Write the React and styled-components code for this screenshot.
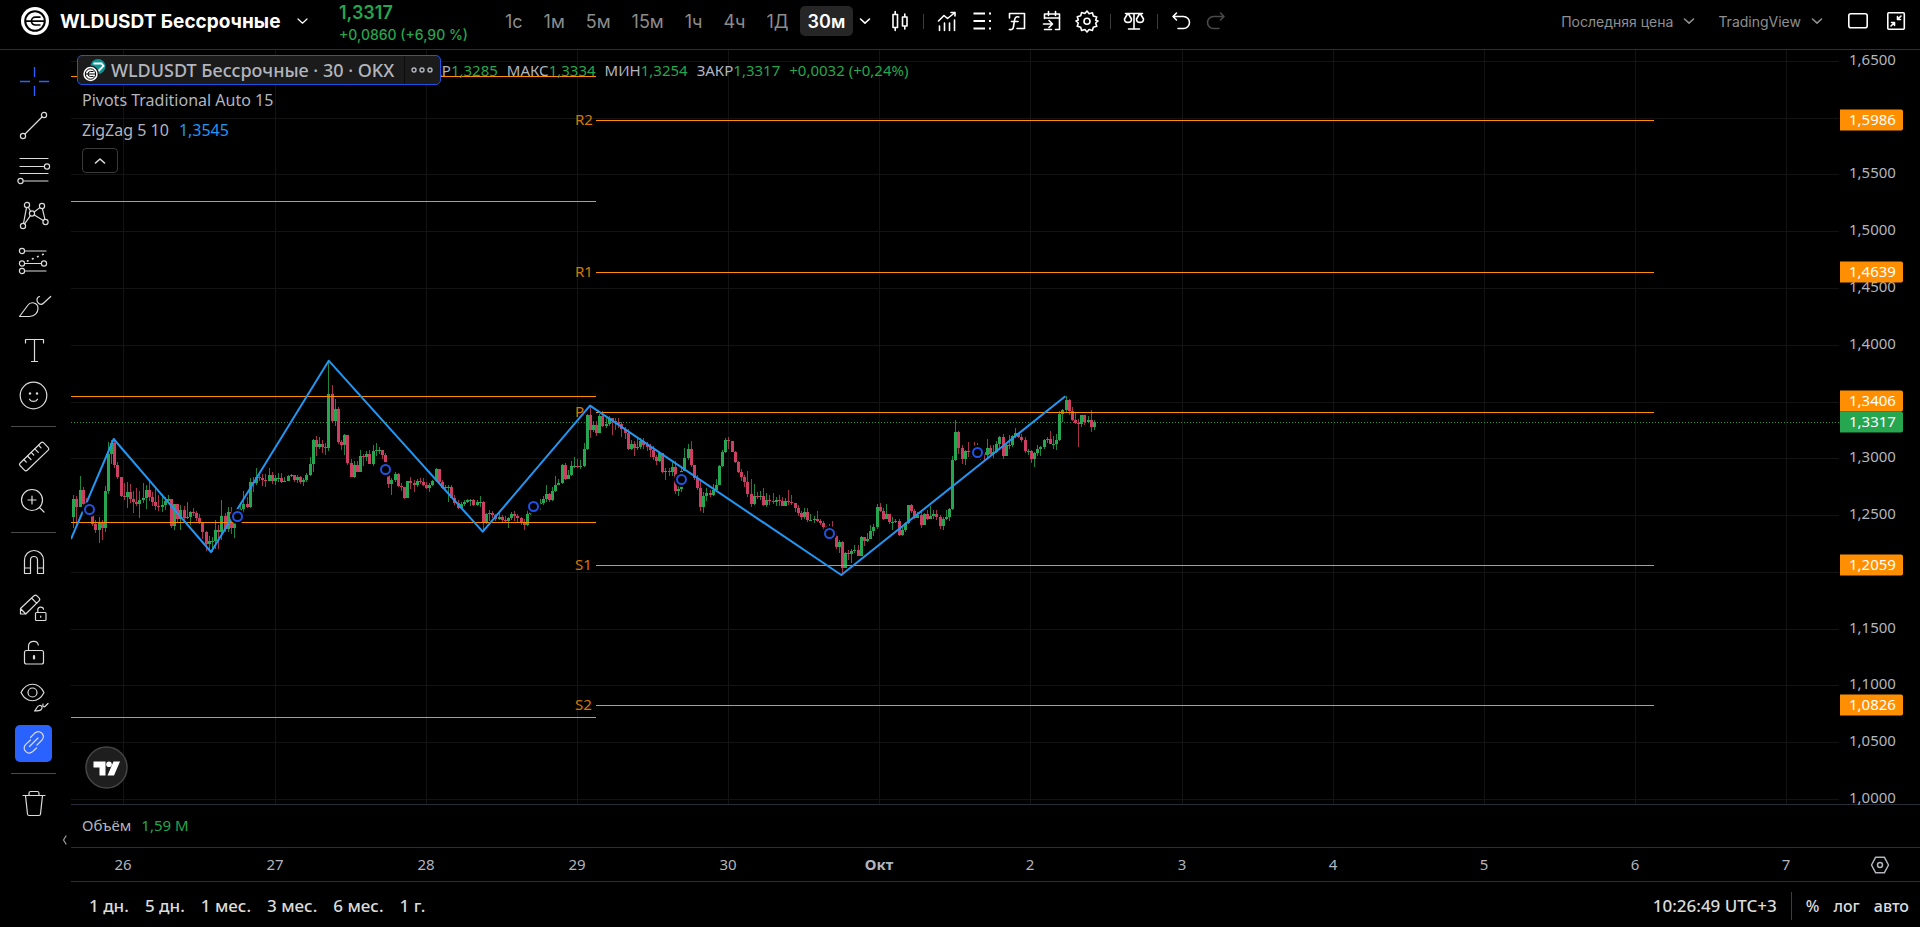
import React from "react";
import styled, { createGlobalStyle, css } from "styled-components";

const GlobalStyle = createGlobalStyle`
  *, *::before, *::after { box-sizing: border-box; }
  html, body, #root { height: 100%; }
  body { margin: 0; background: #000; color: #fff; font-family: "Noto Sans", "Open Sans", sans-serif; }
  button, select { font: inherit; color: inherit; background: none; border: 0; padding: 0; margin: 0; cursor: pointer; }
  svg { display: block; flex: none; }
`;

const UI_FONT = '"Inter", "Roboto", sans-serif';
const GREEN = "#26a64f";
const RED = "#cc3f63";
const ORANGE = "#ff8f00";
const LINE = "#2f2f2f";
const MUTED = "#b2b5be";

/* ---------- shell ---------- */

const Page = styled.div`
  display: flex;
  flex-direction: column;
  min-height: 100vh;
`;

const Header = styled.header`
  display: flex;
  align-items: center;
  height: 50px;
  padding: 0 12px 7px 21px;
  border-bottom: 1px solid ${LINE};
  font-family: ${UI_FONT};
  white-space: nowrap;
`;

const Body = styled.div`
  flex: 1;
  display: flex;
  min-height: 0;
`;

const Main = styled.main`
  flex: 1;
  min-width: 0;
  display: flex;
  flex-direction: column;
`;

/* ---------- header ---------- */

const SymbolButton = styled.button`
  display: flex;
  align-items: center;
  gap: 11px;
  width: 318px;
  font-size: 19px;
  font-weight: 700;
  svg:last-child { margin-left: 4px; }
`;

const Quote = styled.div`
  display: flex;
  flex-direction: column;
  width: 156px;
  padding-top: 6px;
  color: ${GREEN};
  font-weight: 600;
`;

const QuotePrice = styled.span`
  font-size: 18px;
  line-height: 22px;
`;

const QuoteChange = styled.span`
  font-size: 14px;
  line-height: 22px;
  font-weight: 500;
`;

const Intervals = styled.nav`
  display: flex;
  gap: 1px;
`;

const Interval = styled.button`
  height: 30px;
  padding: 0 10px;
  border-radius: 5px;
  font-size: 18px;
  color: #8c8c8c;
  ${(p) =>
    p.$active &&
    css`
      padding: 0 8px;
      background: #262626;
      color: #fff;
      font-weight: 600;
    `}
`;

const HeaderTools = styled.div`
  display: flex;
  align-items: center;
  gap: 11px;
`;

const IconButton = styled.button`
  display: flex;
  align-items: center;
  justify-content: center;
  width: 24px;
  height: 24px;
  color: ${(p) => (p.$dim ? "#4a4a4a" : "#fff")};
`;

const Divider = styled.span`
  width: 1px;
  height: ${(p) => p.$h}px;
  background: #3d3d3d;
`;

const HeaderRight = styled.div`
  display: flex;
  align-items: center;
  gap: 14px;
  margin-left: auto;
`;

const SelectWrap = styled.label`
  display: flex;
  align-items: center;
  gap: 10px;
  margin-right: 9px;
  color: #8f8f8f;
  font-size: 14px;
`;

const Select = styled.select`
  appearance: none;
  outline: none;
  field-sizing: content;
`;

/* ---------- drawing toolbar ---------- */

const Toolbar = styled.aside`
  position: relative;
  display: flex;
  flex-direction: column;
  align-items: center;
  width: 71px;
  padding: 9px 4px 0 0;
`;

const ToolButton = styled.button`
  width: 37px;
  height: 37px;
  margin: 4px 0;
  border-radius: 5px;
  color: ${(p) => (p.$accent ? "#2962ff" : "#dbdbdb")};
  background: ${(p) => (p.$on ? "#2962ff" : "transparent")};
`;

const ToolRule = styled.hr`
  width: 45px;
  height: 1px;
  margin: 7px 0 8px;
  border: 0;
  background: #4a4a4a;
`;

const Collapse = styled.button`
  position: absolute;
  right: 4px;
  bottom: 82px;
  color: #9a9a9a;
`;

/* ---------- chart ---------- */

const PaneRow = styled.section`
  flex: 1;
  display: flex;
  border-bottom: 1px solid #2a2e39;
`;

const Pane = styled.div`
  position: relative;
  flex: 1;
  min-width: 0;
`;

const Plot = styled.svg`
  position: absolute;
  inset: 0;
  width: 100%;
  height: 100%;
`;

const PivotLabel = styled.span`
  position: absolute;
  transform: translateY(-50%);
  color: #d67800;
  font-size: 15px;
  line-height: 20px;
`;

const Handle = styled.span`
  position: absolute;
  width: 11px;
  height: 11px;
  margin: -5px 0 0 -5px;
  border: 2px solid #1e53e5;
  border-radius: 50%;
  background: #000;
  box-shadow: 0 0 0 2px #000;
`;

const PriceAxis = styled.div`
  position: relative;
  width: 81px;
  font-size: 15px;
  color: ${MUTED};
`;

const PriceTick = styled.span`
  position: absolute;
  left: 10px;
  line-height: 20px;
  transform: translateY(-50%);
`;

const PriceTag = styled.span`
  position: absolute;
  left: 1px;
  width: 63px;
  height: 21px;
  padding-left: 9px;
  border-radius: 0 2px 2px 0;
  line-height: 19px;
  color: #fff;
  background: ${(p) => (p.$live ? GREEN : ORANGE)};
  transform: translateY(-50%);
`;

const Legend = styled.div`
  position: relative;
  display: flex;
  flex-direction: column;
  align-items: flex-start;
  padding: 5px 6px;
  font-size: 16px;
  color: ${MUTED};
  white-space: nowrap;
`;

const LegendHead = styled.div`
  display: flex;
  align-items: center;
`;

const LegendTitle = styled.div`
  position: relative;
  z-index: 1;
  display: flex;
  align-items: center;
  width: 364px;
  height: 30px;
  border: 1px solid #1e53e5;
  border-radius: 5px;
  background: #1b1b1b;
  font-size: 18px;
  font-weight: 500;
`;

const LegendName = styled.button`
  display: flex;
  align-items: center;
  gap: 5px;
  width: 327px;
  height: 28px;
  padding-left: 5px;
  border-right: 1px solid #0c0c0c;
`;

const LegendMore = styled.button`
  padding-left: 6px;
`;

const Ohlc = styled.div`
  display: flex;
  gap: 9px;
  margin-left: -28px;
  font-size: 15px;
`;

const Up = styled.span`
  color: ${GREEN};
`;

const LegendRow = styled.div`
  display: flex;
  gap: 10px;
  height: 30px;
  padding-left: 5px;
  line-height: 30px;
`;

const Study = styled.span`
  color: #2196f3;
`;

const LegendToggle = styled.button`
  display: flex;
  align-items: center;
  justify-content: center;
  width: 36px;
  height: 25px;
  margin: 3px 5px;
  border: 1px solid #3a3a3a;
  border-radius: 4px;
  color: #dbdbdb;
`;

const Brand = styled.a`
  position: absolute;
  left: 14px;
  bottom: 15px;
`;

const VolumePane = styled.section`
  display: flex;
  gap: 10px;
  height: 43px;
  padding-left: 11px;
  border-bottom: 1px solid #2a2e39;
  color: ${MUTED};
  font-size: 15px;
  line-height: 40px;
`;

const TimeAxis = styled.div`
  display: flex;
  height: 34px;
  border-bottom: 1px solid ${LINE};
  color: ${MUTED};
  font-size: 15px;
`;

const TimeScale = styled.div`
  position: relative;
  flex: 1;
`;

const TimeTick = styled.span`
  position: absolute;
  line-height: 33px;
  transform: translateX(-50%);
  font-weight: ${(p) => (p.$major ? 700 : 400)};
`;

const AxisSettings = styled.button`
  display: flex;
  align-items: center;
  justify-content: center;
  width: 81px;
  color: ${MUTED};
`;

const Footer = styled.footer`
  display: flex;
  align-items: center;
  height: 45px;
  padding: 2px 11px 0 18px;
  color: #dbdbdb;
  font-size: 17px;
  font-weight: 500;
  white-space: nowrap;
`;

const Ranges = styled.nav`
  display: flex;
  gap: 16px;
`;

const FooterRight = styled.div`
  display: flex;
  align-items: center;
  gap: 14px;
  margin-left: auto;
`;

const ScaleMode = styled.button`
  font-size: 16px;
`;

/* ---------- data ---------- */

const VIEW = { x: 71, y: 50, w: 1768, h: 754 };
const left = (x) => `${((x - VIEW.x) / VIEW.w) * 100}%`;
const top = (y) => `${((y - VIEW.y) / VIEW.h) * 100}%`;

const priceTicks = [
  ["1,6500", 61], ["1,6000", 118], ["1,5500", 174], ["1,5000", 231], ["1,4500", 288], ["1,4000", 345], ["1,3500", 402],
  ["1,3000", 458], ["1,2500", 515], ["1,2000", 572], ["1,1500", 629], ["1,1000", 685], ["1,0500", 742], ["1,0000", 799],
];

const timeTicks = [
  ["26", 123], ["27", 275], ["28", 426], ["29", 577], ["30", 728], ["Окт", 879],
  ["2", 1030], ["3", 1182], ["4", 1333], ["5", 1484], ["6", 1635], ["7", 1786],
];

const priceTags = [
  { text: "1,5986", y: 120 },
  { text: "1,4639", y: 272 },
  { text: "1,3406", y: 401 },
  { text: "1,3317", y: 422, live: true },
  { text: "1,2059", y: 565 },
  { text: "1,0826", y: 705 },
];

const oldPivots = [76, 201, 396, 522, 717];
const pivots = [["R2", 120], ["R1", 272], ["P", 412], ["S1", 565], ["S2", 705]];

const zigzag = "71,539 113.7,439 211,552 328.7,360.7 482.7,531.7 590,405.7 841.3,575 1065.3,396.3";
const handles = [[89, 509], [237, 516], [385, 469], [533, 506], [681, 479], [829, 533], [977, 452]];

/* close, high, low of each 30-minute bar */
const bars = `499 495 528,507 496 526,490 476 507,504 487 507,505 498 515,507 503 512,524 514 526,530 520 533,522 517 543,528 520 540,
491 486 532,454 442 494,443 440 464,465 439 468,477 462 479,496 477 497,497 483 500,492 482 508,499 484 503,502 491 513,
504 488 506,500 491 518,498 483 503,490 485 509,497 481 501,502 492 506,506 489 510,507 495 511,505 494 512,501 497 510,
499 495 504,526 500 528,504 504 530,519 504 522,510 505 530,518 506 520,517 502 519,512 511 525,513 508 516,518 511 521,
523 514 524,532 522 539,544 531 551,541 536 551,541 537 552,530 520 549,532 525 549,516 500 540,529 513 532,512 507 532,
528 507 534,520 512 538,514 508 523,509 504 520,504 491 514,507 497 508,482 478 508,483 477 492,477 468 485,478 472 481,
480 474 486,481 474 487,475 468 481,481 472 484,478 475 485,478 473 482,482 473 483,481 477 482,476 475 481,475 474 477,
480 475 482,477 475 483,482 476 484,480 478 486,475 473 482,464 457 476,440 439 472,447 436 456,444 437 449,447 440 453,
448 443 455,394 361 451,421 385 423,409 399 426,442 407 444,445 440 450,435 434 455,463 435 465,477 459 477,465 461 478,
472 461 472,456 450 472,457 454 466,454 451 461,464 450 464,451 445 466,450 443 456,450 447 454,455 450 459,465 453 466,
484 468 488,480 478 495,474 472 482,486 473 487,487 483 491,498 487 499,481 481 498,483 477 489,485 480 492,481 479 487,
482 478 484,485 478 486,488 482 489,485 483 492,481 480 486,469 468 482,482 469 483,488 480 489,487 485 490,487 485 502,
498 485 498,503 495 505,508 500 509,504 502 509,502 500 506,500 499 503,500 499 506,505 499 506,502 500 506,502 496 507,
523 501 531,514 513 524,513 510 521,515 511 518,519 514 521,517 512 520,520 515 523,521 516 523,518 517 528,514 512 520,
516 511 521,518 514 523,522 517 525,525 519 530,514 510 526,512 508 515,507 503 510,504 500 508,503 499 510,499 496 505,
494 485 502,500 493 502,491 487 501,485 476 492,483 479 485,465 464 484,479 463 480,475 470 479,466 461 476,466 457 468,
467 459 468,466 460 469,449 443 467,415 414 450,430 407 438,425 421 432,433 421 436,416 414 433,426 411 427,424 418 428,
418 416 426,421 418 435,422 418 430,424 418 428,429 422 437,433 427 439,449 429 450,444 440 450,448 441 456,447 437 450,
441 438 449,445 438 449,447 442 451,450 444 457,457 446 460,461 455 465,453 452 462,472 453 473,471 468 480,472 468 476,
467 462 476,491 461 494,489 483 496,471 468 492,458 448 471,449 444 460,465 441 467,478 465 480,488 475 490,507 480 511,
496 492 513,493 488 501,495 490 497,490 484 496,485 479 490,466 465 485,452 450 467,440 438 453,441 437 449,452 441 452,
462 451 463,472 461 473,477 469 481,482 475 487,494 471 497,504 479 507,496 484 505,497 492 499,496 491 500,505 488 506,
500 493 507,501 495 505,502 493 504,500 497 506,501 495 506,506 497 506,501 498 506,502 490 505,503 495 505,508 503 512,
513 505 516,517 511 520,512 508 519,520 508 522,520 514 521,519 516 523,521 511 522,523 519 525,527 521 531,530 526 535,
534 524 541,536 521 540,547 531 549,542 540 553,568 541 575,553 552 568,554 550 560,551 549 563,550 545 553,556 545 556,
537 536 556,541 538 546,539 533 542,531 525 539,527 524 536,507 504 529,511 503 512,519 508 520,514 504 519,522 514 524,
522 517 530,521 519 523,535 519 536,530 527 536,523 522 532,505 505 524,511 504 513,518 509 519,515 512 517,525 512 528,
514 513 525,519 510 520,516 506 519,514 510 519,517 510 520,526 515 529,519 517 530,517 510 520,509 508 521,460 456 510,
432 420 461,448 431 454,459 445 464,451 450 465,452 442 457,451 449 457,452 442 455,450 443 456,452 446 460,455 450 461,
448 439 458,454 445 456,452 445 458,444 441 453,437 436 450,456 434 459,445 442 456,445 435 449,436 435 447,433 428 438,
437 433 438,440 434 442,451 437 453,451 449 455,459 450 463,453 452 467,449 445 456,447 446 456,440 439 449,439 437 443,
444 431 444,444 436 449,440 434 450,414 411 441,410 409 422,400 396 412,411 399 415,420 407 421,423 412 424,424 419 447,
415 415 427,422 416 425,420 416 423,427 410 432,422 420 430`
  .split(",")
  .map((s) => s.trim().split(" ").map(Number));

const candles = bars.map(([close, high, low], i) => {
  const open = i === 0 ? 517 : bars[i - 1][0];
  return { x: Math.round(73.3 + i * 3.15), open, close, high, low, up: close <= open };
});

/* ---------- icons ---------- */

const stroke = { fill: "none", stroke: "currentColor", strokeLinecap: "round", strokeLinejoin: "round" };

const Chevron = ({ w = 12, up, sw = 1.6 }) => (
  <svg width={w} height="8" viewBox="0 0 12 8" {...stroke} strokeWidth={sw}>
    <path d={up ? "M1.5 6 6 2l4.500 4" : "M1.500 2 6 6.200 10.500 2"} />
  </svg>
);

const Ring = ({ x, y }) => <circle cx={x} cy={y} r="2.600" />;

const WorldLogo = ({ size }) => (
  <svg width={size} height={size} viewBox="0 0 28 28">
    <circle cx="14" cy="14" r="14" fill="#fff" />
    <g fill="none" stroke="#000" strokeWidth="2">
      <circle cx="14" cy="14" r="9.800" />
      <path d="M19.500 10.200h-5.200a3.900 3.900 0 0 0 0 7.800h5.200M5 14.100h18" strokeWidth="1.700" />
    </g>
  </svg>
);

const toolIcons = {
  cross: <path d="M19.500 4v10M19.500 23v10M5 18.500h10M24 18.500h10" strokeWidth="1.300" strokeLinecap="butt" />,
  trend: <><Ring x={8} y={28} /><Ring x={29} y={7} /><path d="M10 26 27 9" /></>,
  fib: <><path d="M5 5.500h28M5 13.500h24M5 20.500h28M8.500 28H33" /><Ring x={32} y={13.5} /><Ring x={5.5} y={28} /></>,
  pattern: (
    <>
      <Ring x={12} y={7} /><Ring x={27} y={8} /><Ring x={17} y={15.5} /><Ring x={8} y={28} /><Ring x={30.5} y={24} />
      <path d="M8.500 25.400 11.500 9.600M13.300 9.300l2.300 4M9.600 25.900l5.800-8.300M19.200 14 24.800 9.600M27.400 10.600l2.500 10.800M19.300 16.900l9 5.700" />
    </>
  ),
  forecast: (
    <>
      <Ring x={7} y={8} /><Ring x={7} y={20.5} /><Ring x={29} y={20.5} /><Ring x={7} y={28} />
      <path d="M9.600 8H31M9.600 20.500h16.800M9.600 28H31" />
      <path d="M12.500 18 30 10.500" strokeDasharray="0.500 5" strokeWidth="1.700" />
    </>
  ),
  brush: (
    <>
      <path d="M4.500 28.500 13 17c2.500-3.600 10-3 10 3.500 0 4.500-3.500 8-8.500 8z" />
      <path d="M24.500 8.500c-3.500 1-3 5.500-.8 7 2.200 1.500 3.800.8 5-.5l7-6.500" />
    </>
  ),
  text: <path d="M10.500 10V6.500h18V10M19.500 6.500v22M16.500 28.500h6" />,
  smile: (
    <>
      <circle cx="18.500" cy="17.500" r="13.300" />
      <path d="M14.500 21.200c1.500 3 6.500 3 8 0" />
      <circle cx="15" cy="15.500" r="1.200" fill="currentColor" stroke="none" />
      <circle cx="22" cy="15.500" r="1.200" fill="currentColor" stroke="none" />
    </>
  ),
  ruler: (
    <>
      <path d="M5 24.200 26 3.700c.8-.8 1.700-.8 2.500 0l4.700 4.900c.8.800.8 1.700 0 2.500L12.200 31.300c-.8.800-1.700.8-2.500 0L5 26.500c-.7-.8-.7-1.500 0-2.300z" />
      <path d="m8.800 20.500 2.500 2.600M12.500 17l3.500 3.500M16.200 13.400l2.500 2.600M19.800 9.800l3.500 3.500M23.500 6.200 26 8.800" />
    </>
  ),
  zoom: <><circle cx="17" cy="16" r="10.500" /><path d="M17 12v8M13 16h8M24.500 23.500l4.500 4.500" /></>,
  magnet: <path d="M9.500 28.500V15a9.500 9.500 0 0 1 19 0v13.500h-6V15a3.500 3.500 0 0 0-7 0v13.500zM9.500 23h6M22.500 23h6" />,
  pencil: (
    <>
      <path d="M5.500 24v-5.500L19 5.800c1-1 2-1 3 0l2 2c1 1 1 2 0 3L10.800 24zM5.500 18.500l5.300 5.500M16.500 8l5.300 5.300" />
      <rect x="20.500" y="22.500" width="10.500" height="8" rx="1" />
      <path d="M22.800 22.500v-2.700c0-3.500 5.500-3.500 5.700-.6M25.700 26v1.200" />
    </>
  ),
  lock: (
    <>
      <rect x="9.500" y="15.500" width="19" height="13.500" rx="2" />
      <path d="M13.500 15.500v-4c0-6.500 9-6.800 9.800-1.500" />
      <path d="M19 21v2.500" strokeWidth="2.200" />
    </>
  ),
  eye: (
    <>
      <path d="M6 12.500c5.500-11 17.500-11 23 0-5.500 11-17.500 11-23 0z" />
      <circle cx="17.500" cy="12.500" r="4.500" />
      <path d="M19.500 31c2-1 2-5 5-5.500 2.500-.3 3.500 2.500 1.500 4.200-1.500 1.300-4 1.300-6.500 1.300zM28 24c-.8 2.800 1 3.500 2.500 2l2.500-2.500" />
    </>
  ),
  link: (
    <>
      <path d="m15.500 12.500 4-4.200c5-4.500 11.500 1.500 7.500 6.700l-5 5" />
      <path d="m21.500 23-3.500 3.300c-5 4.500-11.500-1.500-7.500-6.700l5-4.600M14.500 21.500l8.500-8.500" />
    </>
  ),
  trash: <path d="M8 9.500h22M14 9.500V7.200c0-1.200.5-1.700 1.700-1.700h6.600c1.200 0 1.700.5 1.700 1.700v2.300M10.500 9.500l2 18.500c.1 1 .6 1.500 1.600 1.500h9.800c1 0 1.500-.5 1.600-1.500l2-18.500" />,
};

const Tool = ({ icon, label, ...rest }) => (
  <ToolButton aria-label={label} {...rest}>
    <svg width="37" height="37" viewBox="0 0 37 37" {...stroke} strokeWidth="1.200">{toolIcons[icon]}</svg>
  </ToolButton>
);

const headIcons = {
  candles: <path d="M5 5.500h4.500v13H5zM7.200 2.500v3M7.200 18.500v3M14.500 8h4.500v9h-4.500zM16.800 5v3M16.800 17v3" />,
  chart: <path d="M3.500 12 9 6.500l3.500 3L20 3.500M16 3.500h4v3.500M4.500 17v4.500M9.500 14v7.500M14.500 14v7.500M19.500 11v10.500" />,
  list: <path d="M3.500 4.500H15M3.500 12H15M3.500 19.500H15M19 4.500h2M19 12h2M19 19.500h2" strokeWidth="2" strokeLinecap="butt" />,
  fx: (
    <>
      <path d="M4.500 9V4.500h15v15H12" />
      <path d="M13.800 8c-2.800-.8-3.800.5-4.200 3l-1.200 7c-.4 2.300-1.600 3-4 2.500M6.500 12.500h6.500" />
    </>
  ),
  calendar: <path d="M4.500 9.500V5h15v15.500h-4M4.500 9h15M8.500 2.500v4M15.500 2.500v4M3.500 15h8.500M9 11.500l3.500 3.500L9 18.500M4.500 20.500h7" />,
  gear: (
    <>
      <path d="M12 2l2.100 2.700 3.300-1 .9 3.300 3.400.9-1 3.300L23 12l-2.300 2 1 3.300-3.400.9-.9 3.300-3.300-1L12 23l-2.100-2.500-3.300 1-.9-3.300-3.400-.9 1-3.300L1 12l2.300-1-1-3.300 3.400-.9.9-3.300 3.300 1z" />
      <circle cx="12" cy="12.200" r="3" />
    </>
  ),
  scale: <path d="M3.500 4.500h17M12 4.500V20M6.500 20h11M5.500 5 2.500 10c0 4.500 7 4.500 7 0l-3-5M17.500 5l-3 5c0 4.500 7 4.500 7 0l-3-5" />,
  undo: <path d="M7.500 4 4 7.500 7.500 11M4 7.500h10.500a5.700 5.700 0 0 1 0 12H9" />,
  redo: <path d="M16.500 4 20 7.500 16.500 11M20 7.500H9.500a5.700 5.700 0 0 0 0 12H15" />,
};

const HeadTool = ({ icon, label, dim }) => (
  <IconButton aria-label={label} $dim={dim} disabled={dim}>
    <svg width="24" height="24" viewBox="0 0 24 24" {...stroke} strokeWidth="1.600">{headIcons[icon]}</svg>
  </IconButton>
);

/* ---------- parts ---------- */

function TopBar() {
  return (
    <Header>
      <SymbolButton>
        <WorldLogo size={28} />
        WLDUSDT Бессрочные
        <Chevron w={13} sw={1.2} />
      </SymbolButton>
      <Quote>
        <QuotePrice>1,3317</QuotePrice>
        <QuoteChange>+0,0860 (+6,90 %)</QuoteChange>
      </Quote>
      <Intervals>
        {["1с", "1м", "5м", "15м", "1ч", "4ч", "1Д", "30м"].map((t) => (
          <Interval key={t} $active={t === "30м"}>{t}</Interval>
        ))}
      </Intervals>
      <HeaderTools>
        <IconButton aria-label="Интервалы"><Chevron /></IconButton>
        <HeadTool icon="candles" label="Тип графика" />
        <Divider $h={15} />
        <HeadTool icon="chart" label="Индикаторы" />
        <HeadTool icon="list" label="Шаблоны" />
        <HeadTool icon="fx" label="Формулы" />
        <HeadTool icon="calendar" label="Перейти к дате" />
        <HeadTool icon="gear" label="Настройки" />
        <Divider $h={15} />
        <HeadTool icon="scale" label="Сравнить" />
        <Divider $h={15} />
        <HeadTool icon="undo" label="Отменить" />
        <HeadTool icon="redo" label="Повторить" dim />
      </HeaderTools>
      <HeaderRight>
        <SelectWrap>
          <Select aria-label="Источник цены"><option>Последняя цена</option></Select>
          <Chevron />
        </SelectWrap>
        <SelectWrap>
          <Select aria-label="Вид графика"><option>TradingView</option></Select>
          <Chevron />
        </SelectWrap>
        <IconButton aria-label="Панель">
          <svg width="24" height="24" viewBox="0 0 24 24" {...stroke} strokeWidth="1.600"><rect x="2.800" y="4.800" width="18.400" height="14" rx="2" /></svg>
        </IconButton>
        <IconButton aria-label="Свернуть">
          <svg width="24" height="24" viewBox="0 0 24 24" {...stroke} strokeWidth="1.600">
            <rect x="3.800" y="3.800" width="16.500" height="16.500" rx="1" />
            <path d="M17 7l-3.500 3.500M13.500 7.500v3h3M7 17l3.500-3.500M7.500 13.500h3v3" />
          </svg>
        </IconButton>
      </HeaderRight>
    </Header>
  );
}

function DrawingBar() {
  return (
    <Toolbar>
      <Tool icon="cross" label="Курсор" $accent />
      <Tool icon="trend" label="Линия тренда" />
      <Tool icon="fib" label="Фибоначчи" />
      <Tool icon="pattern" label="Паттерны" />
      <Tool icon="forecast" label="Прогноз" />
      <Tool icon="brush" label="Кисть" />
      <Tool icon="text" label="Текст" />
      <Tool icon="smile" label="Иконки" />
      <ToolRule />
      <Tool icon="ruler" label="Линейка" />
      <Tool icon="zoom" label="Увеличить" />
      <ToolRule />
      <Tool icon="magnet" label="Магнит" />
      <Tool icon="pencil" label="Режим рисования" />
      <Tool icon="lock" label="Заблокировать" />
      <Tool icon="eye" label="Скрыть" />
      <Tool icon="link" label="Синхронизация" $on />
      <ToolRule />
      <Tool icon="trash" label="Удалить" />
      <Collapse aria-label="Скрыть панель">
        <svg width="5" height="10" viewBox="0 0 5 10" {...stroke} strokeWidth="1.300"><path d="M4 1 1.500 5 4 9" /></svg>
      </Collapse>
    </Toolbar>
  );
}

function PricePlot() {
  const right = VIEW.x + VIEW.w;
  return (
    <Plot viewBox={`${VIEW.x} ${VIEW.y} ${VIEW.w} ${VIEW.h}`} preserveAspectRatio="none" aria-hidden="true">
      <g stroke="#131313" shapeRendering="crispEdges">
        {priceTicks.map(([t, y]) => <path key={t} d={`M71 ${y}.5H${right}`} />)}
        {timeTicks.map(([t, x]) => <path key={t} d={`M${x}.5 50V804`} />)}
      </g>
      <path d={`M71 422.500H${right}`} stroke="#23994a" strokeDasharray="1 2" shapeRendering="crispEdges" />
      <g shapeRendering="crispEdges">
        {candles.map((c) => (
          <g key={c.x} fill={c.up ? GREEN : RED}>
            <rect x={c.x} y={c.high} width="1" height={c.low - c.high} opacity="0.8" />
            <rect x={c.x - 1} y={Math.min(c.open, c.close)} width="3" height={Math.max(1, Math.abs(c.open - c.close))} />
          </g>
        ))}
      </g>
      <g stroke={ORANGE} shapeRendering="crispEdges">
        {oldPivots.map((y) => <path key={y} d={`M71 ${y}.5H596`} />)}
        {pivots.map(([t, y]) => <path key={t} d={`M596 ${y}.5H1654`} />)}
      </g>
      <polyline points={zigzag} fill="none" stroke="#2196f3" strokeWidth="2" strokeLinejoin="round" />
    </Plot>
  );
}

function ChartLegend() {
  return (
    <Legend>
      <LegendHead>
        <LegendTitle>
          <LegendName>
            <svg width="23" height="23" viewBox="0 0 23 23">
              <circle cx="15" cy="7.500" r="7.500" fill="#0b9393" />
              <path d="M10.500 4.500h8l2 2.500-6 6" fill="none" stroke="#fff" strokeWidth="1.800" />
              <circle cx="7.500" cy="15" r="8.500" fill="#1b1b1b" />
              <circle cx="7.500" cy="15" r="7.200" fill="#fff" />
              <path d="M10.500 12.500H7.500a2.300 2.300 0 0 0 0 5h3M2.500 15h10" fill="none" stroke="#000" />
              <circle cx="7.500" cy="15" r="5.200" fill="none" stroke="#000" />
            </svg>
            WLDUSDT Бессрочные · 30 · OKX
          </LegendName>
          <LegendMore aria-label="Ещё">
            <svg width="22" height="8" viewBox="0 0 22 8" {...stroke} strokeWidth="1.400">
              <circle cx="3" cy="4" r="2" /><circle cx="11" cy="4" r="2" /><circle cx="19" cy="4" r="2" />
            </svg>
          </LegendMore>
        </LegendTitle>
        <Ohlc>
          <span>ОТКР<Up>1,3285</Up></span>
          <span>МАКС<Up>1,3334</Up></span>
          <span>МИН<Up>1,3254</Up></span>
          <span>ЗАКР<Up>1,3317</Up></span>
          <Up>+0,0032 (+0,24%)</Up>
        </Ohlc>
      </LegendHead>
      <LegendRow>Pivots Traditional Auto 15</LegendRow>
      <LegendRow>ZigZag 5 10<Study>1,3545</Study></LegendRow>
      <LegendToggle aria-label="Свернуть легенду"><Chevron up /></LegendToggle>
    </Legend>
  );
}

function PriceChart() {
  return (
    <PaneRow>
      <Pane>
        <PricePlot />
        {pivots.map(([t, y]) => <PivotLabel key={t} style={{ left: left(575), top: top(y - 1) }}>{t}</PivotLabel>)}
        {handles.map(([x, y]) => <Handle key={x} style={{ left: left(x), top: top(y) }} />)}
        <ChartLegend />
        <Brand href="#" aria-label="TradingView">
          <svg width="43" height="43" viewBox="0 0 43 43">
            <circle cx="21.500" cy="21.500" r="20.500" fill="#1e1e1e" stroke="#454545" strokeWidth="1.500" />
            <path d="M8.500 15.500h12v14h-6v-8h-6zM28.500 15.500H35l-6 14h-6.500z" fill="#fff" />
            <circle cx="24" cy="18.300" r="2.800" fill="#fff" />
          </svg>
        </Brand>
      </Pane>
      <PriceAxis>
        {priceTicks.filter(([t]) => !["1,6000", "1,3500", "1,2000"].includes(t)).map(([t, y]) => (
          <PriceTick key={t} style={{ top: top(y - 2) }}>{t}</PriceTick>
        ))}
        {priceTags.map((t) => <PriceTag key={t.text} $live={t.live} style={{ top: top(t.y) }}>{t.text}</PriceTag>)}
      </PriceAxis>
    </PaneRow>
  );
}

export default function App() {
  return (
    <Page>
      <GlobalStyle />
      <TopBar />
      <Body>
        <DrawingBar />
        <Main>
          <PriceChart />
          <VolumePane>Объём<Up>1,59 M</Up></VolumePane>
          <TimeAxis>
            <TimeScale>
              {timeTicks.map(([t, x]) => <TimeTick key={t} $major={t === "Окт"} style={{ left: left(x) }}>{t}</TimeTick>)}
            </TimeScale>
            <AxisSettings aria-label="Настройки шкалы">
              <svg width="20" height="18" viewBox="0 0 20 18" {...stroke} strokeWidth="1.500">
                <path d="M5.700 1.200h8.600L18.500 9l-4.200 7.800H5.700L1.500 9z" /><circle cx="10" cy="9" r="2.500" />
              </svg>
            </AxisSettings>
          </TimeAxis>
          <Footer>
            <Ranges>
              {["1 дн.", "5 дн.", "1 мес.", "3 мес.", "6 мес.", "1 г."].map((t) => <button key={t}>{t}</button>)}
            </Ranges>
            <FooterRight>
              <button>10:26:49 UTC+3</button>
              <Divider $h={28} />
              <ScaleMode>%</ScaleMode>
              <ScaleMode>лог</ScaleMode>
              <ScaleMode>авто</ScaleMode>
            </FooterRight>
          </Footer>
        </Main>
      </Body>
    </Page>
  );
}
